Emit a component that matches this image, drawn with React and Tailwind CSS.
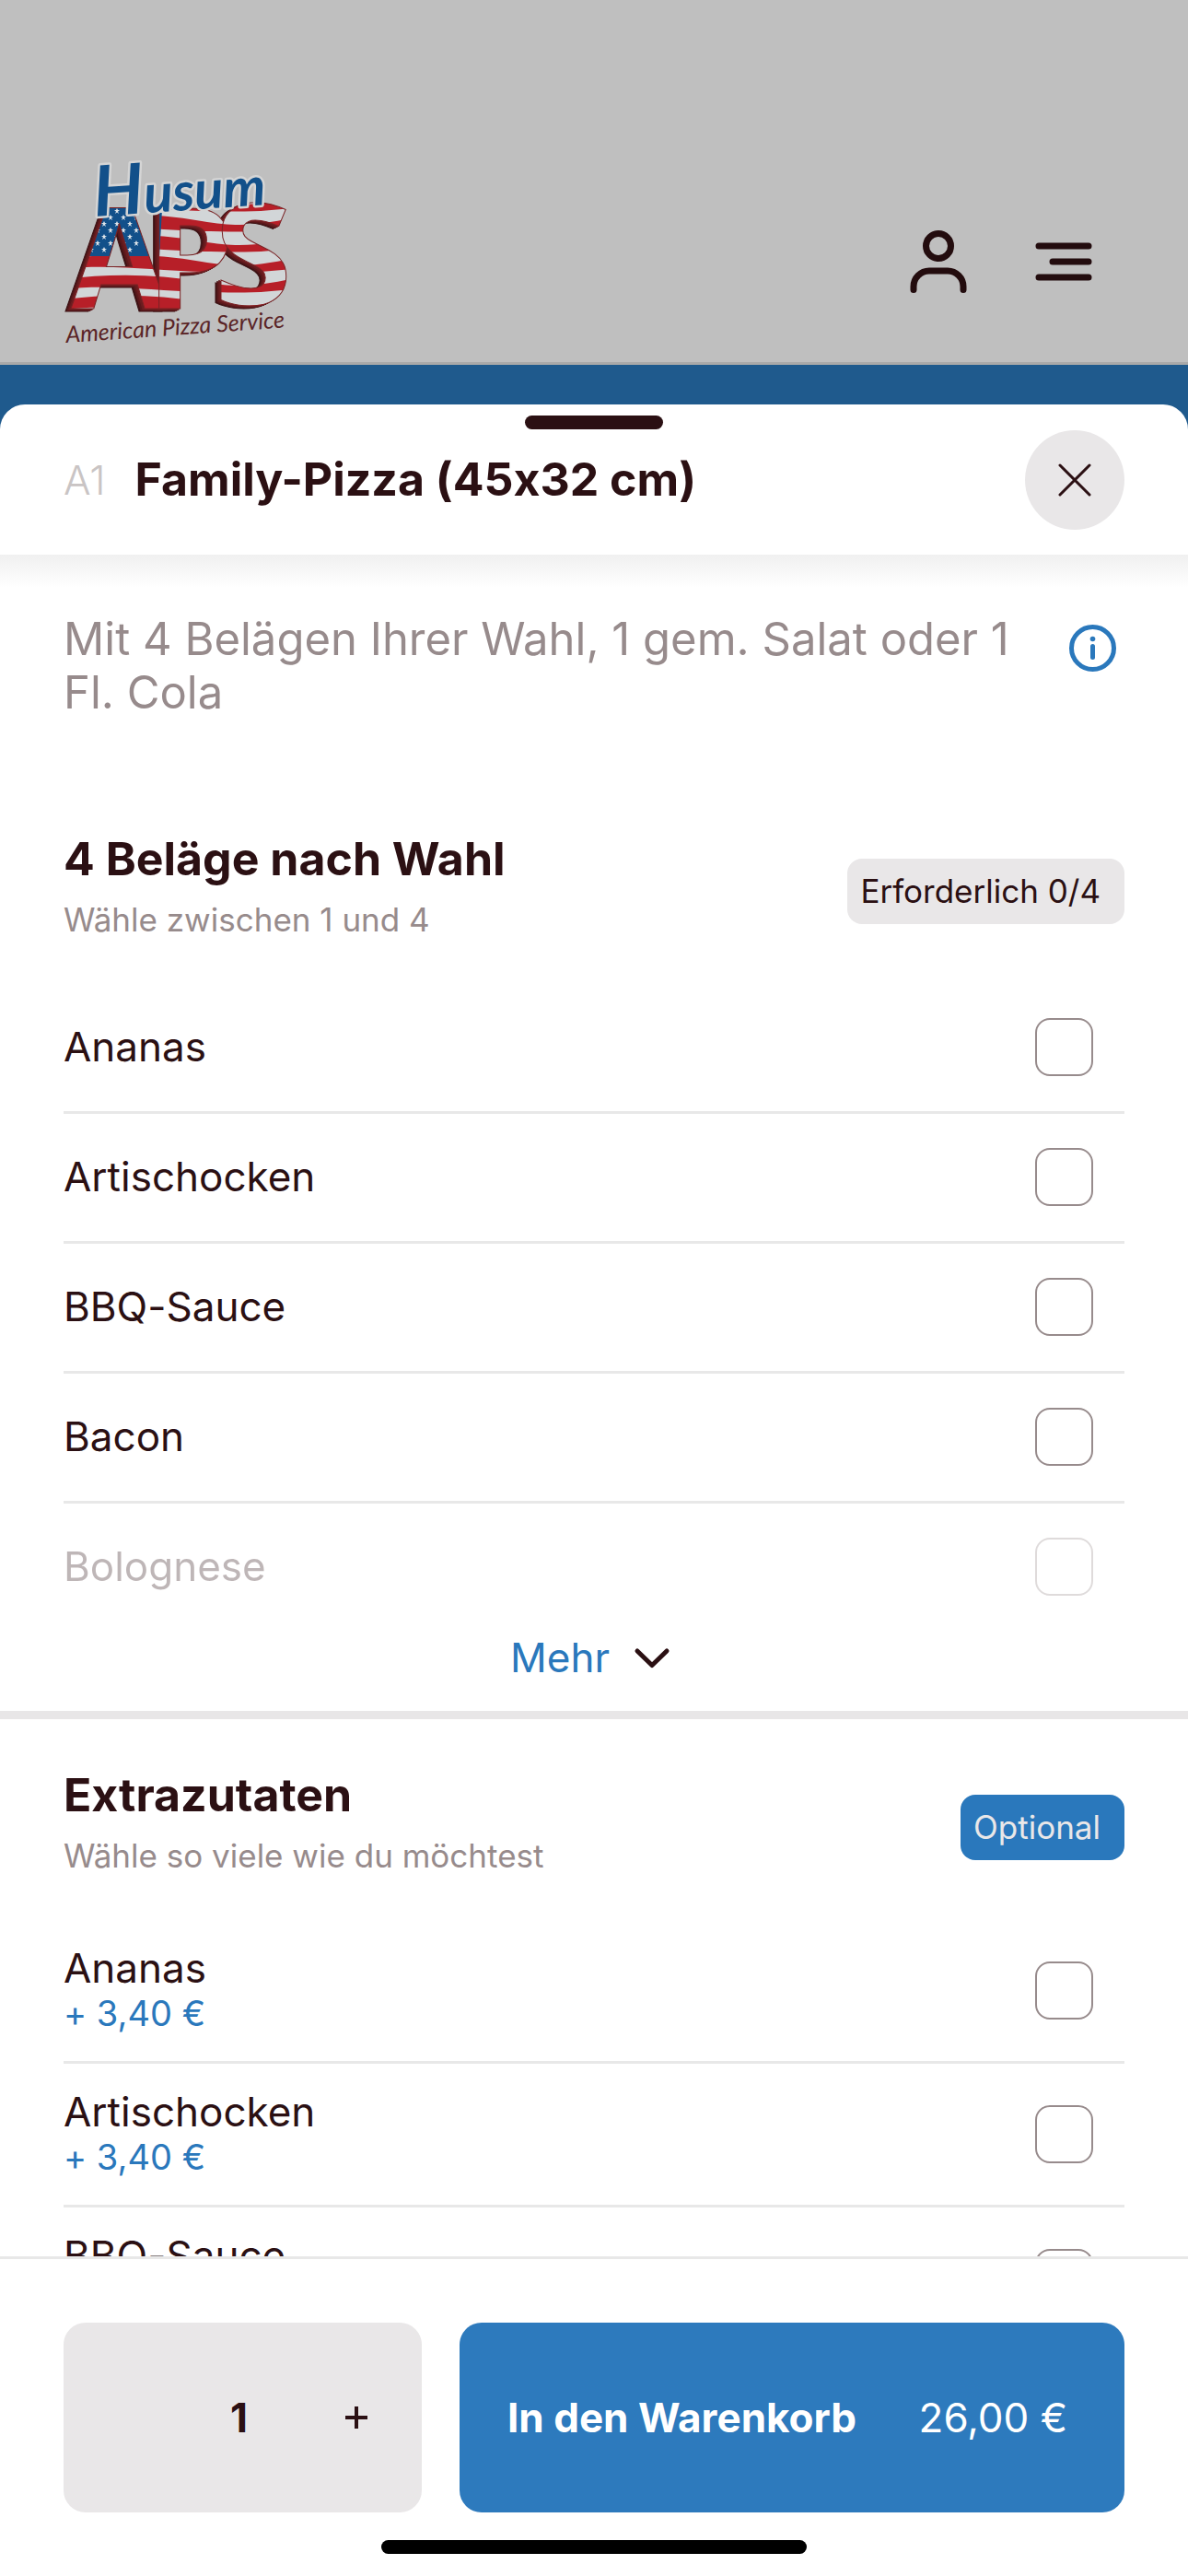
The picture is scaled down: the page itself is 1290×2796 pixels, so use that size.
import { useState } from 'react'

const toppings = ['Ananas', 'Artischocken', 'BBQ-Sauce', 'Bacon', 'Bolognese']

const extras = [
  { name: 'Ananas', price: '3,40' },
  { name: 'Artischocken', price: '3,40' },
  { name: 'BBQ-Sauce', price: '3,40' },
]

// stripes and starred canton that fill the APS lettering
function Flag() {
  const stripes = [42, 64, 86, 108, 130, 152, 174]
  const stars = []
  for (let row = 0; row < 7; row++) {
    for (let col = 0; col < 5; col++) {
      stars.push([16 + col * 14 + (row % 2) * 7, 58 + row * 7])
    }
  }
  return (
    <>
      <rect x="0" y="30" width="260" height="160" fill="#d2d6d8" />
      {stripes.map(y => (
        <path
          key={y}
          d={`M0 ${y + 2} C50 ${y - 4} 100 ${y - 4} 150 ${y + 5} S220 ${y + 6} 260 ${y} V${y + 11} C220 ${y + 17} 200 ${y + 17} 150 ${y + 16} S50 ${y + 7} 0 ${y + 13} Z`}
          fill="#b71f28"
        />
      ))}
      <path d="M0 40 H108 L104 107 H0 Z" fill="#12508a" />
      {stars.map(([x, y]) => (
        <path
          key={`${x}-${y}`}
          d={`M${x} ${y - 3} l1 2 h2 l-2 1.500 l1 2.500 l-2 -1.500 l-2 1.500 l1 -2.500 l-2 -1.500 h2 Z`}
          fill="#dfe5ea"
        />
      ))}
    </>
  )
}

function Logo() {
  return (
    <svg viewBox="0 0 250 204" className="w-[250px] h-[204px] overflow-visible" role="img" aria-label="Husum American Pizza Service">
      <defs>
        <pattern id="flag" patternUnits="userSpaceOnUse" x="0" y="0" width="260" height="204">
          <Flag />
        </pattern>
      </defs>
      <g className="[filter:drop-shadow(-2px_1px_0_#6b1d20)_drop-shadow(-2px_1px_0_#5a181b)_drop-shadow(-2px_1px_0_#3d1214)]">
        <text
          y="164"
          fontFamily="'Open Sans', sans-serif"
          fontWeight="700"
          fontSize="152"
          fill="url(#flag)"
          stroke="#7a2325"
          strokeWidth="1"
        >
          <tspan x="8">A</tspan>
          <tspan x="90">P</tspan>
          <tspan x="164" y="160">S</tspan>
        </text>
      </g>
      <text
        x="34"
        y="64"
        transform="rotate(-4 34 64)"
        fontFamily="Lato, sans-serif"
        fontStyle="italic"
        fontWeight="700"
        fontSize="76"
        fill="#12508a"
        stroke="#d5d5d5"
        strokeWidth="5"
        strokeLinejoin="round"
        paintOrder="stroke"
      >
        H<tspan fontSize="58">usum</tspan>
      </text>
      <text
        x="3"
        y="201"
        transform="rotate(-4 3 201)"
        fontFamily="Lato, sans-serif"
        fontStyle="italic"
        fontSize="25"
        fill="#5a2426"
      >
        American Pizza Service
      </text>
    </svg>
  )
}

function Checkbox({ id }) {
  return (
    <input
      id={id}
      type="checkbox"
      className="appearance-none shrink-0 w-[63px] h-[63px] mr-[34px] rounded-2xl border-2 border-[#978b8c] bg-white checked:bg-[#2a78bc]"
    />
  )
}

function SectionHead({ title, hint, children }) {
  return (
    <div className="flex items-end justify-between px-[69px] pt-[52px] pb-[48px]">
      <div>
        <h2 className="text-[50px] leading-[60px] font-bold">{title}</h2>
        <p className="mt-[14px] text-[35px] leading-[44px] text-[#978b8c]">{hint}</p>
      </div>
      {children}
    </div>
  )
}

function App() {
  const [amount, setAmount] = useState(1)

  const badgeClass = "mb-[17px] h-[71px] flex items-center rounded-2xl pl-[14px] pr-[26px] pb-[2px] text-[35px] leading-[44px]"

  return (
    <div className="h-screen flex flex-col overflow-hidden bg-[#1f5a8d] text-[#2b1013] font-['Inter',sans-serif] [font-feature-settings:'calt'_0]">
      <header className="shrink-0 flex items-end justify-between h-[396px] pl-[69px] pr-[104px] pb-[18px] bg-[#bfbfbf] border-b-3 border-[#a9a9a9]">
        <a href="#home">
          <Logo />
        </a>
        <div className="flex items-center gap-[74px] mb-[57px] text-[#230c0e]">
          <button aria-label="Konto">
            <svg viewBox="0 0 62 68" className="w-[62px] h-[68px]" fill="none" stroke="currentColor" strokeWidth="7" strokeLinecap="round">
              <circle cx="31" cy="17" r="13.500" />
              <path d="M4 64.500 V61 A17 17 0 0 1 21 44 H41 A17 17 0 0 1 58 61 V64.500" />
            </svg>
          </button>
          <button aria-label="Menü">
            <svg viewBox="0 0 62 68" className="w-[62px] h-[68px]" fill="none" stroke="currentColor" strokeWidth="7" strokeLinecap="round">
              <path d="M4 17 H58 M19 34 H58 M4 51 H58" />
            </svg>
          </button>
        </div>
      </header>

      <main className="relative flex-1 min-h-0 mt-[43px] flex flex-col bg-white rounded-t-[27px]">
        <div className="absolute top-3 left-1/2 -translate-x-1/2 w-[150px] h-[15px] rounded-full bg-[#2b1013]" />

        <div className="shrink-0 flex items-center h-[163px] px-[69px]">
          <span className="text-[44px] leading-[54px] font-light text-[#c9c4c4]">A1</span>
          <h1 className="ml-8 pb-[2px] flex-1 text-[50px] leading-[60px] font-bold">Family-Pizza (45x32 cm)</h1>
          <button aria-label="Schließen" className="w-[108px] h-[108px] rounded-full bg-[#e9e7e8] flex items-center justify-center">
            <svg viewBox="0 0 36 36" className="w-9 h-9" fill="none" stroke="currentColor" strokeWidth="3" strokeLinecap="round">
              <path d="M2 2 L34 34 M34 2 L2 34" />
            </svg>
          </button>
        </div>

        <div className="flex-1 min-h-0 overflow-hidden bg-linear-to-b from-[#f0f0f0] to-white bg-size-[100%_36px] bg-no-repeat">
          <div className="flex items-start justify-between gap-8 pl-[69px] pr-[78px] pt-[63px] pb-[69px]">
            <p className="text-[49px] leading-[58px] text-[#978b8c]">
              Mit 4 Belägen Ihrer Wahl, 1 gem. Salat oder 1 Fl. Cola
            </p>
            <button aria-label="Information" className="shrink-0 mt-[13px] text-[#2a78bc]">
              <svg viewBox="0 0 51 51" className="w-[51px] h-[51px]" fill="none" stroke="currentColor" strokeWidth="5" strokeLinecap="round">
                <circle cx="25.500" cy="25.500" r="23" />
                <path d="M25.500 23.500 V35.500" />
                <circle cx="25.500" cy="15.500" r="2.800" fill="currentColor" stroke="none" />
              </svg>
            </button>
          </div>

          <section className="border-b-9 border-[#e8e6e7]">
            <SectionHead title="4 Beläge nach Wahl" hint="Wähle zwischen 1 und 4">
              <span className={`${badgeClass} bg-[#e9e7e8]`}>Erforderlich 0/4</span>
            </SectionHead>
            <ul className="px-[69px]">
              {toppings.map(name => (
                <li key={name} className="border-b-3 border-[#e8e8e8] last:border-b-0 last:opacity-30">
                  <label htmlFor={`topping-${name}`} className="flex items-center justify-between h-[138px] pb-[2px] text-[44px] leading-[54px]">
                    {name}
                    <Checkbox id={`topping-${name}`} />
                  </label>
                </li>
              ))}
            </ul>
            <div className="flex justify-center pt-[2px] pb-[31px]">
              <button className="flex items-center gap-[26px] h-[54px] pr-2 text-[44px] leading-[54px] text-[#2a78bc]">
                Mehr
                <svg viewBox="0 0 40 24" className="w-10 h-6 text-[#2b1013]" fill="none" stroke="currentColor" strokeWidth="5" strokeLinecap="round" strokeLinejoin="round">
                  <path d="M4 5 L20 20.500 L36 5" />
                </svg>
              </button>
            </div>
          </section>

          <section>
            <SectionHead title="Extrazutaten" hint="Wähle so viele wie du möchtest">
              <span className={`${badgeClass} bg-[#2a78bc] text-[#e9e7e8]`}>Optional</span>
            </SectionHead>
            <ul className="px-[69px]">
              {extras.map(extra => (
                <li key={extra.name} className="border-b-3 border-[#e8e8e8]">
                  <label htmlFor={`extra-${extra.name}`} className="flex items-center justify-between h-[153px]">
                    <span>
                      <span className="block text-[44px] leading-[48px]">{extra.name}</span>
                      <span className="block text-[38px] leading-[50px] text-[#2a78bc]">+ {extra.price} €</span>
                    </span>
                    <Checkbox id={`extra-${extra.name}`} />
                  </label>
                </li>
              ))}
            </ul>
          </section>
        </div>

        <footer className="shrink-0 bg-white border-t-3 border-[#e8e8e8] px-[69px] pt-[69px] pb-6">
          <div className="flex gap-[41px] h-[206px]">
            <div className="w-[389px] shrink-0 grid grid-cols-3 items-center pr-2 rounded-3xl bg-[#e9e7e8]">
              <span />
              <span className="text-center text-[44px] leading-[54px] font-bold">{amount}</span>
              <button aria-label="Mehr hinzufügen" onClick={() => setAmount(amount + 1)} className="flex justify-center">
                <svg viewBox="0 0 24 24" className="w-6 h-6" stroke="currentColor" strokeWidth="4">
                  <path d="M12 0 V24 M0 12 H24" />
                </svg>
              </button>
            </div>
            <button className="flex-1 flex items-center justify-between pl-[52px] pr-[62px] rounded-3xl bg-[#2d7abd] text-white text-[44px] leading-[54px]">
              <span className="font-bold">In den Warenkorb</span>
              <span>26,00 €</span>
            </button>
          </div>
          <div className="mx-auto mt-[30px] w-[462px] h-[15px] rounded-full bg-black" />
        </footer>
      </main>
    </div>
  )
}

export default App
